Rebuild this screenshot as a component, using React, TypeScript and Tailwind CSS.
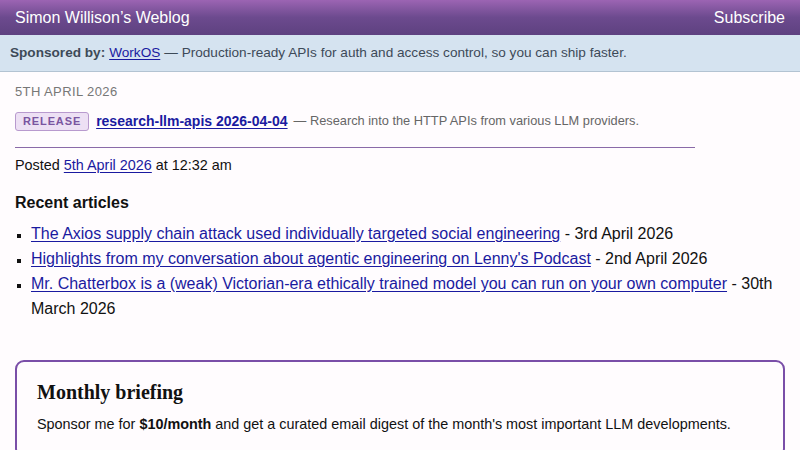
const articles = [
  {
    title: 'The Axios supply chain attack used individually targeted social engineering',
    date: '3rd April 2026',
  },
  {
    title: "Highlights from my conversation about agentic engineering on Lenny's Podcast",
    date: '2nd April 2026',
  },
  {
    title: 'Mr. Chatterbox is a (weak) Victorian-era ethically trained model you can run on your own computer',
    date: '30th March 2026',
  },
];

export default function App() {
  return (
    <div className="min-h-[450px] bg-[#fffcfe] font-['Liberation_Sans',Arial,sans-serif] text-[#111]">
      <header className="h-[35px] flex items-center justify-between px-[15px] bg-gradient-to-b from-[#9c64b3] via-[#6c4a8e] to-[#5e4180] text-white text-[16px]">
        <span>Simon Willison’s Weblog</span>
        <a className="text-white">Subscribe</a>
      </header>

      <div className="h-[37px] flex items-center px-[10px] bg-[#d5e3f0] border-b border-[#b3c3d2] text-[13.6px] text-[#3d4a58]">
        <strong className="mr-1">Sponsored by:</strong>
        <a className="text-[#1a1aa0] underline underline-offset-2">WorkOS</a>
        <span className="ml-1">— Production-ready APIs for auth and access control, so you can ship faster.</span>
      </div>

      <main className="px-[15px] pt-[10px]">
        <p className="text-[13px] tracking-[0.03em] text-[#777] uppercase">5th April 2026</p>

        <div className="mt-[9px] flex items-center w-[680px] pb-[15px] border-b border-[#8a6aa8]">
          <span className="px-[7px] h-[19px] flex items-center text-[11px] font-bold tracking-[0.08em] text-[#7a55a0] bg-[#ede0f4] border border-[#b89ace] rounded-[3px]">
            RELEASE
          </span>
          <a className="ml-[7px] text-[14px] font-bold text-[#1a1aa0] underline underline-offset-2">research-llm-apis 2026-04-04</a>
          <span className="ml-[6px] text-[12.8px] text-[#666]">— Research into the HTTP APIs from various LLM providers.</span>
        </div>

        <p className="mt-[7px] text-[14.4px]">
          Posted <a className="text-[#1a1aa0] underline underline-offset-2">5th April 2026</a> at 12:32 am
        </p>

        <h3 className="mt-[15px] text-[16px] font-bold">Recent articles</h3>

        <ul className="mt-[6px] list-[square] pl-[16px] text-[16px] leading-[25px]">
          {articles.map((a) => (
            <li key={a.title} className="marker:text-[12px]">
              <a className="text-[#1a1aa0] underline underline-offset-2">{a.title}</a> - {a.date}
            </li>
          ))}
        </ul>

        <section className="mt-[39px] border-2 border-[#7a4ea8] rounded-[9px] px-[20px] pt-[15px] pb-[20px]">
          <h2 className="font-['Liberation_Serif',Times,serif] text-[20px] font-bold">Monthly briefing</h2>
          <p className="mt-[7px] text-[14.4px]">
            Sponsor me for <strong>$10/month</strong> and get a curated email digest of the month's most important LLM developments.
          </p>
        </section>
      </main>
    </div>
  );
}
